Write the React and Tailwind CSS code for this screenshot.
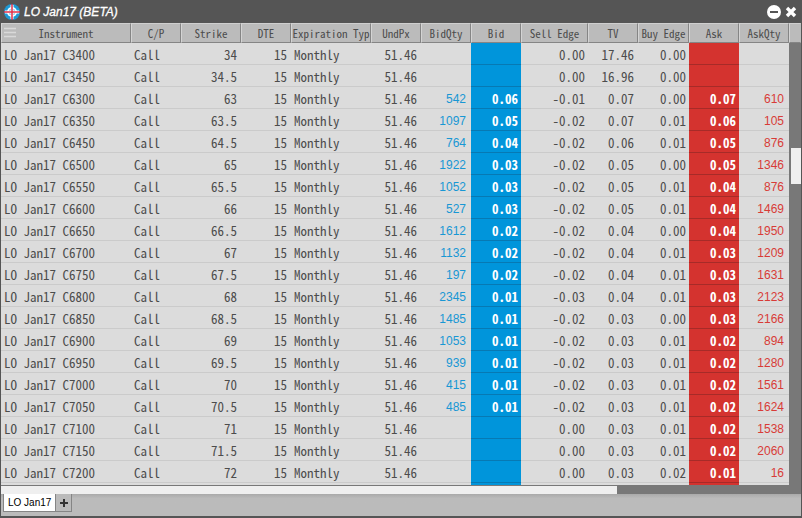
const columns = [
  { label: 'Instrument', width: 'w-[130px]' },
  { label: 'C/P', width: 'w-[50px]' },
  { label: 'Strike', width: 'w-[60px]' },
  { label: 'DTE', width: 'w-[50px]' },
  { label: 'Expiration Typ', width: 'w-[80px]' },
  { label: 'UndPx', width: 'w-[50px]' },
  { label: 'BidQty', width: 'w-[50px]' },
  { label: 'Bid', width: 'w-[50px]' },
  { label: 'Sell Edge', width: 'w-[67px]' },
  { label: 'TV', width: 'w-[50px]' },
  { label: 'Buy Edge', width: 'w-[51px]' },
  { label: 'Ask', width: 'w-[50px]' },
  { label: 'AskQty', width: 'w-[50px]' },
];

const rows = [
  ['C3400', '34', '', '', '0.00', '17.46', '0.00', '', ''],
  ['C3450', '34.5', '', '', '0.00', '16.96', '0.00', '', ''],
  ['C6300', '63', '542', '0.06', '-0.01', '0.07', '0.00', '0.07', '610'],
  ['C6350', '63.5', '1097', '0.05', '-0.02', '0.07', '0.01', '0.06', '105'],
  ['C6450', '64.5', '764', '0.04', '-0.02', '0.06', '0.01', '0.05', '876'],
  ['C6500', '65', '1922', '0.03', '-0.02', '0.05', '0.00', '0.05', '1346'],
  ['C6550', '65.5', '1052', '0.03', '-0.02', '0.05', '0.01', '0.04', '876'],
  ['C6600', '66', '527', '0.03', '-0.02', '0.05', '0.01', '0.04', '1469'],
  ['C6650', '66.5', '1612', '0.02', '-0.02', '0.04', '0.00', '0.04', '1950'],
  ['C6700', '67', '1132', '0.02', '-0.02', '0.04', '0.01', '0.03', '1209'],
  ['C6750', '67.5', '197', '0.02', '-0.02', '0.04', '0.01', '0.03', '1631'],
  ['C6800', '68', '2345', '0.01', '-0.03', '0.04', '0.01', '0.03', '2123'],
  ['C6850', '68.5', '1485', '0.01', '-0.02', '0.03', '0.00', '0.03', '2166'],
  ['C6900', '69', '1053', '0.01', '-0.02', '0.03', '0.01', '0.02', '894'],
  ['C6950', '69.5', '939', '0.01', '-0.02', '0.03', '0.01', '0.02', '1280'],
  ['C7000', '70', '415', '0.01', '-0.02', '0.03', '0.01', '0.02', '1561'],
  ['C7050', '70.5', '485', '0.01', '-0.02', '0.03', '0.01', '0.02', '1624'],
  ['C7100', '71', '', '', '0.00', '0.03', '0.01', '0.02', '1538'],
  ['C7150', '71.5', '', '', '0.00', '0.03', '0.01', '0.02', '2060'],
  ['C7200', '72', '', '', '0.00', '0.03', '0.02', '0.01', '16'],
];

const base = 'h-[22px] whitespace-pre border-b p-0';
const cell = `${base} pt-[2px] leading-[19px]`;
const plain = `${cell} border-[#cbcbcb]`;
const number = `${plain} pr-1 text-right`;
const quantity = `${base} border-[#cbcbcb] pt-1 pr-[5px] text-right font-['Liberation_Sans',sans-serif] text-[12px] leading-[17px]`;
const bidCell = `${cell} border-[#0779b3] bg-[#0095db] pr-[3px] text-right font-bold text-white`;
const askCell = `${cell} border-[#a62b28] bg-[#d4332f] pr-[3px] text-right font-bold text-white`;

function Row({ values }) {
  const [code, strike, bidQty, bid, sellEdge, tv, buyEdge, ask, askQty] = values;
  return (
    <tr>
      <td className={`${plain} pl-[3px]`}>LO Jan17 {code}</td>
      <td className={`${plain} pl-[3px]`}>Call</td>
      <td className={number}>{strike}</td>
      <td className={number}>15</td>
      <td className={`${plain} pl-[3px]`}>Monthly</td>
      <td className={number}>51.46</td>
      <td className={`${quantity} text-[#1897d4]`}>{bidQty}</td>
      <td className={bidCell}>{bid}</td>
      <td className={`${plain} pr-[3px] text-right`}>{sellEdge}</td>
      <td className={number}>{tv}</td>
      <td className={`${plain} pr-[3px] text-right`}>{buyEdge}</td>
      <td className={askCell}>{ask}</td>
      <td className={`${quantity} text-[#d83b37]`}>{askQty}</td>
    </tr>
  );
}

function TrailingRow() {
  return (
    <tr>
      {columns.map(({ label }) => (
        <td
          key={label}
          className={label === 'Bid' ? bidCell : label === 'Ask' ? askCell : plain}
        />
      ))}
    </tr>
  );
}

function Logo() {
  return (
    <svg viewBox="0 0 16 16" className="size-4" aria-hidden="true">
      <circle cx="8" cy="8" r="8" fill="#1d9ad6" />
      <circle cx="8" cy="8" r="5" fill="#fff" />
      <circle cx="8" cy="8" r="3.2" fill="#3fa9de" />
      <path d="M8 1v14M1 8h14" stroke="#fff" strokeWidth="3" />
      <path d="M8 0v16M0 8h16" stroke="#e0304a" strokeWidth="1.5" />
    </svg>
  );
}

export default function App() {
  return (
    <div className="flex h-screen flex-col overflow-hidden border-x border-b-2 border-[#555] bg-[#555] font-['Liberation_Sans',sans-serif]">
      <header className="flex h-[23px] shrink-0 items-center pr-1 pl-[3px] text-white">
        <Logo />
        <h1 className="ml-1 text-[12px] font-normal italic [-webkit-text-stroke:0.3px_white]">LO Jan17 (BETA)</h1>
        <button type="button" aria-label="Minimize" className="ml-auto">
          <svg viewBox="0 0 14 14" className="block size-[14px]">
            <circle cx="7" cy="7" r="7" fill="#fff" />
            <path d="M3 7h8" stroke="#555" strokeWidth="2" />
          </svg>
        </button>
        <button type="button" aria-label="Close" className="ml-1">
          <svg viewBox="0 0 12 12" className="block size-3">
            <path d="M2 2l8 8M10 2l-8 8" stroke="#fff" strokeWidth="3.4" />
          </svg>
        </button>
      </header>

      <main className="flex min-h-0 flex-1">
        <div className="min-w-0 flex-1 overflow-hidden bg-[#dcdcdc]">
          <table className="w-full table-fixed border-separate border-spacing-0 font-['Noto_Sans_Mono_CJK_JP','Liberation_Mono',monospace] text-[13px] text-[#4c4c4c]">
            <colgroup>
              {columns.map(({ label, width }) => (
                <col key={label} className={width} />
              ))}
            </colgroup>
            <thead>
              <tr>
                {columns.map(({ label }) => (
                  <th
                    key={label}
                    className="relative h-5 overflow-hidden border border-t-[#cfcfcf] border-r-[#858585] border-b-[#858585] border-l-[#d4d4d4] bg-[#bbb] p-0 text-center text-[11px] leading-[18px] font-normal whitespace-nowrap"
                  >
                    {label === 'Instrument' && (
                      <button type="button" aria-label="Column menu" className="absolute top-[3px] left-[2px]">
                        <svg viewBox="0 0 12 12" className="block size-3">
                          <path d="M0 1.5h12M0 5.5h12M0 9.5h12" stroke="#d9d9d9" strokeWidth="1.6" />
                        </svg>
                      </button>
                    )}
                    {label}
                  </th>
                ))}
              </tr>
            </thead>
            <tbody>
              {rows.map((values) => (
                <Row key={values[0]} values={values} />
              ))}
              <TrailingRow />
            </tbody>
          </table>
        </div>
        <div className="flex w-3 shrink-0 flex-col bg-[#787878] pl-[2px]">
          <div className="-ml-[2px] h-5 border border-t-[#cfcfcf] border-r-[#bbb] border-b-[#858585] border-l-[#d4d4d4] bg-[#bbb]" />
          <div className="mt-[105px] h-9 bg-[#efefef]" />
        </div>
      </main>

      <div className="h-[9px] shrink-0 bg-[#787878] pt-px">
        <div className="h-full w-[77%] bg-[#efefef]" />
      </div>

      <footer className="flex h-[22px] shrink-0 items-start bg-[#bbb] bg-linear-to-b from-[#aaa] to-[#bbb] to-20% pl-[2px] text-[10px] text-black">
        <button type="button" className="h-[18px] border border-t-0 border-[#858585] bg-white px-1 leading-[17px]">
          LO Jan17
        </button>
        <button
          type="button"
          aria-label="Add tab"
          className="flex h-[18px] w-4 items-center justify-center border border-t-0 border-l-0 border-[#858585] bg-[#bbb]"
        >
          <svg viewBox="0 0 8 8" className="size-2">
            <path d="M4 0v8M0 4h8" stroke="#333" strokeWidth="2" />
          </svg>
        </button>
      </footer>
    </div>
  );
}
